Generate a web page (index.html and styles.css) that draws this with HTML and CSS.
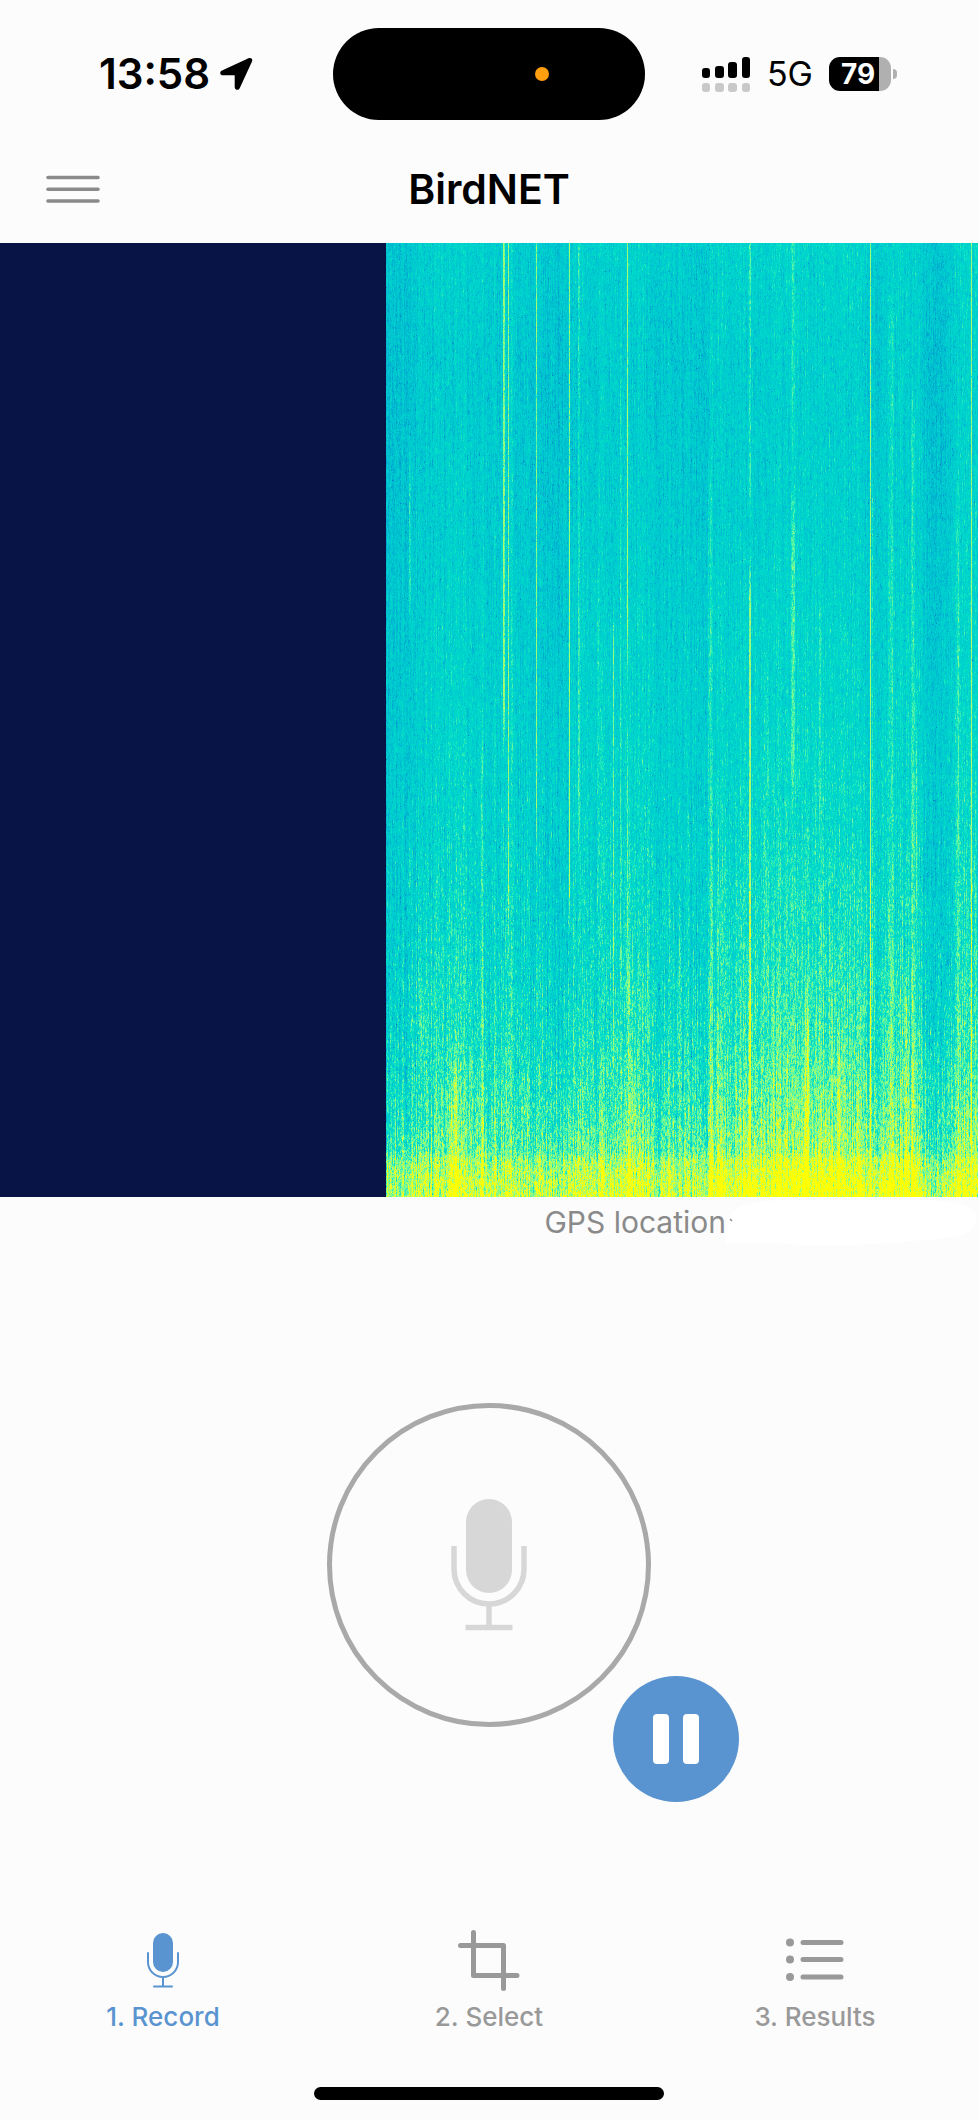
FILE: index.html
```html
<!DOCTYPE html>
<html lang="en">
<head>
    <meta charset="utf-8">
    <meta name="viewport" content="width=device-width, initial-scale=1">
    <title>BirdNET</title>
    <link rel="stylesheet" href="styles.css">
</head>
<body>
    <div class="app">
        <div class="status-bar">
            <div class="status-left">
                <span class="time">13:58</span>
                <svg width="33" height="34" viewBox="0 0 33 34"><path d="M2 13.5 L28.5 1.2 C31 0.2 33 1.8 32 4.5 L19.8 31 C18.6 34 14.7 33.2 14.7 30 V18.3 H3.5 C0 18.3 -1 15 2 13.5 Z"/></svg>
            </div>
            <div class="island"><span class="mic-dot"></span></div>
            <div class="status-right">
                <svg width="49" height="35" viewBox="0 0 49 35">
                    <rect x="0" y="11" width="8" height="10" rx="3"/>
                    <rect x="13" y="9" width="9" height="12" rx="3"/>
                    <rect x="26" y="5" width="9" height="16" rx="3"/>
                    <rect x="40" y="0" width="8" height="21" rx="3"/>
                    <g fill="#c9c9c9">
                        <rect x="0" y="26" width="8" height="9" rx="3"/>
                        <rect x="13" y="26" width="9" height="9" rx="3"/>
                        <rect x="26" y="26" width="9" height="9" rx="3"/>
                        <rect x="40" y="26" width="8" height="9" rx="3"/>
                    </g>
                </svg>
                <span class="network">5G</span>
                <div class="battery"><span class="battery-level">79</span></div>
            </div>
        </div>

        <header class="header">
            <button class="menu-btn" type="button" aria-label="Menu">
                <svg width="54" height="28" viewBox="0 0 54 28" stroke="#8a8a8a" stroke-width="3.6" stroke-linecap="round"><path d="M2 2.5 H52 M2 14.3 H52 M2 26 H52"/></svg>
            </button>
            <h1>BirdNET</h1>
        </header>

        <div class="spectrogram">
            <canvas id="spectrogram"></canvas>
        </div>

        <div class="gps">
            <span>GPS location</span>
            <svg class="gps-value" width="252" height="50" viewBox="0 0 252 50">
                <path fill="#fff" d="M0 28 C4 10 18 4 60 3 L204 3 C239 5 252 12 250 24 C249 38 229 42 184 44 C144 49 84 49 44 46 L0 46 Z"/>
                <path stroke="#8a8a8a" stroke-width="1.5" d="M4 22 L6 24"/>
            </svg>
        </div>

        <main class="recorder">
            <div class="record-wrap">
                <button class="record-btn" type="button" aria-label="Record">
                    <svg width="76" height="132" viewBox="0 0 76 132" fill="none" stroke="#d7d7d7" stroke-width="5.5">
                        <rect x="15" y="0" width="46" height="94" rx="23" fill="#d7d7d7" stroke="none"/>
                        <path d="M3 47 V70 A35 35 0 0 0 73 70 V47 M38 105 V128 M14.5 128.5 H61.5"/>
                    </svg>
                </button>
                <button class="pause-btn" type="button" aria-label="Pause">
                    <svg width="46" height="50" viewBox="0 0 46 50" fill="#fff"><rect x="0" y="0" width="16" height="50" rx="4"/><rect x="30" y="0" width="16" height="50" rx="4"/></svg>
                </button>
            </div>
        </main>

        <nav class="tabs">
            <a class="tab active" href="#record">
                <svg width="64" height="64" viewBox="0 0 64 64" fill="none" stroke="currentColor" stroke-width="2">
                    <rect x="22" y="5" width="20" height="39" rx="10" fill="currentColor" stroke="none"/>
                    <path d="M17 25 V34 A15 15 0 0 0 47 34 V25 M32 49 V58 M23 58.5 H41" stroke-linecap="round"/>
                </svg>
                <span>1. Record</span>
            </a>
            <a class="tab" href="#select">
                <svg width="64" height="64" viewBox="0 0 64 64" fill="none" stroke="currentColor" stroke-width="5" stroke-linecap="round" stroke-linejoin="round"><path d="M16.5 4.5 V47.5 H60 M3.5 17.5 H46.5 V60.5"/></svg>
                <span>2. Select</span>
            </a>
            <a class="tab" href="#results">
                <svg width="64" height="64" viewBox="0 0 64 64" fill="currentColor" stroke="currentColor" stroke-width="5" stroke-linecap="round">
                    <g stroke="none"><circle cx="7" cy="14.5" r="4"/><circle cx="7" cy="31.5" r="4"/><circle cx="7" cy="49" r="4"/></g>
                    <path d="M20 14.5 H58 M20 31.5 H58 M20 49 H58"/>
                </svg>
                <span>3. Results</span>
            </a>
        </nav>
        <div class="home-indicator"></div>
    </div>

    <script src="spectrogram.js"></script>
</body>
</html>
```

FILE: styles.css
```css
* { box-sizing: border-box; }
body { margin: 0; background: #fcfcfc; color: #000; font-family: Inter, "Liberation Sans", sans-serif; }
button { padding: 0; border: none; background: none; cursor: pointer; }
svg, canvas { display: block; flex-shrink: 0; }
.app { display: flex; flex-direction: column; min-height: 100vh; }

.status-bar { display: grid; grid-template-columns: 1fr auto 1fr; align-items: center; height: 134px; padding-top: 14px; }
.status-left { display: flex; align-items: center; gap: 10px; padding-left: 99px; }
.time { font-size: 42px; font-weight: 600; line-height: 48px; }
.island { display: flex; align-items: center; justify-content: flex-end; width: 312px; height: 92px; padding-right: 96px; border-radius: 46px; background: #000; }
.mic-dot { width: 14px; height: 14px; border-radius: 50%; background: #ff9f0f; }
.status-right { display: flex; align-items: center; justify-content: flex-end; gap: 16px; padding-right: 87px; }
.network { font-size: 34px; line-height: 40px; }
.battery { position: relative; width: 62px; height: 34px; border-radius: 11px; background: linear-gradient(to right, #000 80%, #b0b0b0 80%); }
.battery::after { content: ""; position: absolute; left: 64px; top: 12px; width: 4px; height: 10px; border-radius: 0 4px 4px 0; background: #b0b0b0; }
.battery-level { display: block; padding-left: 12px; color: #fff; font-size: 28px; font-weight: 700; line-height: 34px; }

.header { display: grid; grid-template-columns: 1fr auto 1fr; align-items: center; height: 109px; padding: 0 46px; }
.header h1 { margin: 0; font-size: 41px; font-weight: 600; line-height: 48px; }
.menu-btn { justify-self: start; }

.spectrogram { display: grid; grid-template-columns: 386fr 592fr; height: 45vh; background: #081446; }
.spectrogram canvas { grid-column: 2; width: 100%; height: 100%; min-height: 0; background: #00d2cc; }

.gps { display: flex; justify-content: flex-end; height: 50px; color: #8a8a8a; font-size: 30px; line-height: 50px; }

.recorder { display: flex; flex: 1; align-items: center; justify-content: center; padding: 40px 0; }
.record-wrap { position: relative; }
.record-btn { display: flex; align-items: center; justify-content: center; width: 324px; height: 324px; border: 5px solid #a9a9a9; border-radius: 50%; }
.pause-btn { position: absolute; left: 286px; top: 273px; display: flex; align-items: center; justify-content: center; width: 126px; height: 126px; border-radius: 50%; background: #5994d0; }

.tabs { display: grid; grid-template-columns: repeat(3, 1fr); padding-top: 45px; }
.tab { display: flex; flex-direction: column; align-items: center; gap: 7px; color: #999; font-size: 26px; font-weight: 500; line-height: 36px; text-decoration: none; }
.tab.active { color: #5994d0; }
.home-indicator { width: 350px; height: 13px; margin: 52px auto 20px; border-radius: 7px; background: #000; }
```

FILE: spectrogram.js
```js
const canvas = document.getElementById('spectrogram');
const W = canvas.width = canvas.clientWidth;
const H = canvas.height = canvas.clientHeight;
const ctx = canvas.getContext('2d');

// level -> colour
const stops = [
    [0, 0, 60, 150],
    [0.25, 0, 150, 205],
    [0.45, 0, 200, 208],
    [0.6, 0, 222, 200],
    [0.75, 110, 250, 155],
    [0.9, 200, 255, 80],
    [1, 255, 255, 0]
];

// clicks and tones: x, width, start, end, strength (all on a 592 x 954 grid)
const streaks = [
    [24, 2, 180, 400, 0.18], [24, 2, 560, 680, 0.14],
    [118, 2, 0, 520, 0.32], [122, 1, 0, 700, 0.32], [126, 2, 0, 954, 0.12],
    [150, 1, 0, 620, 0.3], [183, 1, 0, 700, 0.36], [193, 2, 0, 640, 0.13],
    [212, 2, 280, 700, 0.1], [227, 1, 340, 860, 0.24], [234, 1, 80, 800, 0.12],
    [241, 1, 0, 440, 0.34], [241, 1, 440, 800, 0.16], [261, 1, 520, 954, 0.12],
    [292, 3, 680, 900, 0.08], [324, 4, 190, 954, 0.1], [364, 2, 0, 300, 0.12],
    [364, 2, 300, 954, 0.28], [380, 5, 370, 800, 0.06], [407, 4, 0, 220, 0.08],
    [407, 4, 220, 560, 0.15], [434, 2, 320, 600, 0.07], [484, 1, 0, 954, 0.36],
    [486, 1, 200, 800, 0.16], [504, 5, 40, 954, 0.1], [527, 4, 130, 954, 0.12],
    [530, 1, 450, 700, 0.15], [572, 4, 220, 954, 0.08], [585, 1, 0, 954, 0.3],
    [96, 2, 460, 954, 0.09], [36, 6, 700, 840, 0.08], [68, 8, 790, 954, 0.12],
    [245, 6, 690, 954, 0.08], [420, 5, 740, 954, 0.16], [452, 3, 760, 954, 0.14],
    [387, 2, 720, 954, 0.14], [446, 2, 680, 954, 0.1], [519, 3, 700, 954, 0.13]
];

// broad loudness changes over time
const bands = [
    [0, -0.07], [20, -0.03], [60, 0.02], [110, 0.01], [140, -0.02], [175, -0.04],
    [190, 0.01], [240, 0.02], [290, -0.01], [318, -0.04], [324, 0.03], [370, 0.02],
    [410, 0.04], [470, 0.03], [482, -0.01], [498, -0.01], [505, 0.03], [532, 0.03],
    [540, -0.04], [560, -0.04], [568, 0.03], [592, 0.04]
];

// average level from the top (high pitch) to the bottom (low pitch)
const pitch = [
    [0, 0.5], [120, 0.47], [260, 0.48], [440, 0.51], [600, 0.53], [720, 0.56],
    [800, 0.6], [860, 0.67], [908, 0.74], [918, 0.85], [954, 0.94]
];

let seed = 7;
function rand() {
    seed = (seed * 1664525 + 1013904223) >>> 0;
    return seed / 4294967296;
}

function lerp(points, t) {
    let i = 1;
    while (i < points.length - 1 && points[i][0] < t) i++;
    const a = points[i - 1], b = points[i];
    const k = Math.min(1, Math.max(0, (t - a[0]) / (b[0] - a[0])));
    return a.slice(1).map((v, n) => v + (b[n + 1] - v) * k);
}

const palette = [];
for (let i = 0; i <= 255; i++) palette.push(lerp(stops, i / 255));

const img = ctx.createImageData(W, H);
for (let x = 0; x < W; x++) {
    const gx = x / W * 592;
    const band = lerp(bands, gx)[0];
    const column = (rand() - 0.5) * 0.08;
    const lines = streaks.filter(s => gx >= s[0] - s[1] / 2 && gx < s[0] + s[1] / 2);
    let grain = 0;
    let drift = 0;
    let target = 0;

    for (let y = 0; y < H; y++) {
        const gy = y / H * 954;
        const low = Math.max(0, (gy - 480) / 474);
        if (y % 40 === 0) target = (rand() - 0.5) * (0.08 + low * 0.08);
        drift += (target - drift) * 0.05;
        grain = grain * 0.55 + (rand() + rand() - 1) * (0.1 + low * 0.08);

        let v = lerp(pitch, gy)[0] + band * (1 + low * 0.6) + column * (1 + low * 1.6) + drift + grain;
        if (gx > 322 && gx < 532) v += low * 0.05;
        if (rand() < 0.012) v -= 0.16;
        for (const s of lines) {
            const edge = Math.min(1, (gy - s[2]) / 60 + (s[2] === 0), (s[3] - gy) / 60 + (s[3] === 954));
            if (edge > 0) v += s[4] * edge * (0.7 + rand() * 0.5);
        }
        // the upper range never gets fully yellow
        if (gy < 640 && v > 0.86) v = 0.86;

        const c = palette[Math.round(Math.min(1, Math.max(0, v)) * 255)];
        const p = (y * W + x) * 4;
        img.data[p] = c[0];
        img.data[p + 1] = c[1];
        img.data[p + 2] = c[2];
        img.data[p + 3] = 255;
    }
}
ctx.putImageData(img, 0, 0);
```
